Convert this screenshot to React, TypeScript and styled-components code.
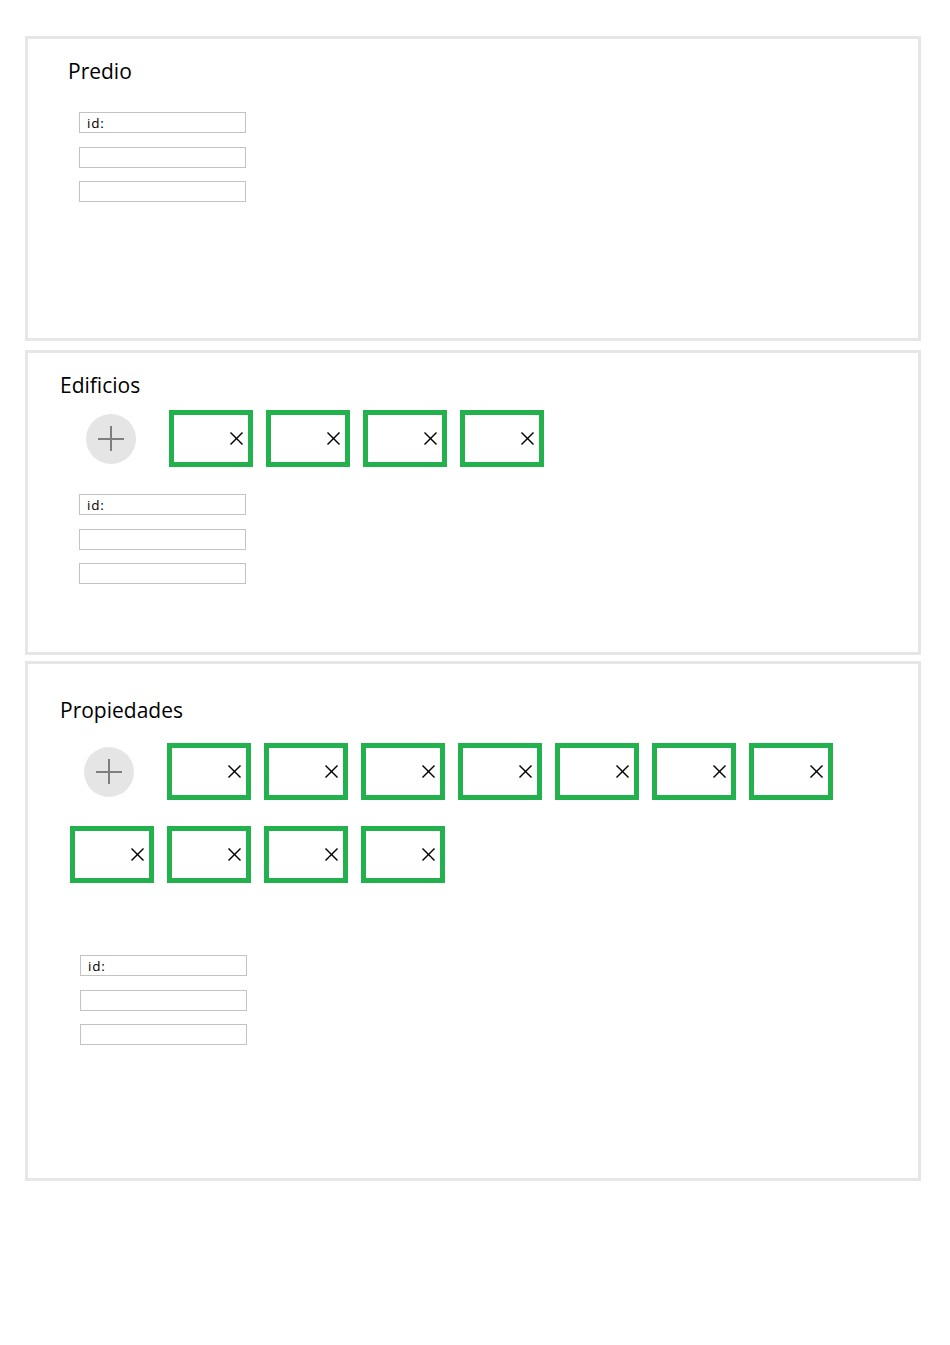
import styled, { createGlobalStyle } from 'styled-components'

/*---> Data <---*/
const sections = [
  { title: 'Predio', height: 305, gap: 0, titleLeft: 40, titleTop: 18, fieldsLeft: 51, fieldsTop: 27, items: null },
  { title: 'Edificios', height: 305, gap: 9, titleLeft: 32, titleTop: 18, fieldsLeft: 51, fieldsTop: 27, items: 4, indent: 44, tilesTop: 11 },
  { title: 'Propiedades', height: 520, gap: 6, titleLeft: 32, titleTop: 32, fieldsLeft: 52, fieldsTop: 72, items: 11, indent: 42, tilesTop: 19 },
]

/*---> Component <---*/
export default function App() {
  return (
    <>
      <GlobalStyle />
      <Page>
        {sections.map((s) => (
          <Panel key={s.title} $height={s.height} $gap={s.gap}>
            <Title $left={s.titleLeft} $top={s.titleTop}>
              {s.title}
            </Title>
            {s.items !== null && (
              <Tiles $indent={s.indent ?? 0} $top={s.tilesTop ?? 0}>
                <AddSlot>
                  <AddButton type="button" aria-label="Agregar">
                    <svg width="28" height="28" viewBox="0 0 28 28">
                      <line x1="1" y1="14" x2="27" y2="14" stroke="#7f7f7f" strokeWidth="2" />
                      <line x1="14" y1="1" x2="14" y2="26" stroke="#7f7f7f" strokeWidth="2" />
                    </svg>
                  </AddButton>
                </AddSlot>
                {Array.from({ length: s.items }).map((_, i) => (
                  <Tile key={i}>
                    <CloseMark width="13" height="13" viewBox="0 0 13 13">
                      <line x1="0.5" y1="0.5" x2="12.5" y2="12.5" stroke="#000" strokeWidth="1.4" />
                      <line x1="12.5" y1="0.5" x2="0.5" y2="12.5" stroke="#000" strokeWidth="1.4" />
                    </CloseMark>
                  </Tile>
                ))}
              </Tiles>
            )}
            <Fields $left={s.fieldsLeft} $top={s.fieldsTop}>
              <Field defaultValue="id:" readOnly />
              <Field readOnly />
              <Field readOnly />
            </Fields>
          </Panel>
        ))}
      </Page>
    </>
  )
}

/*---> Styles <---*/
const GlobalStyle = createGlobalStyle`
  html, body {
    margin: 0;
    background: #ffffff;
    font-family: "Open Sans", "Noto Sans", sans-serif;
    color: #000000;
  }
`

const Page = styled.div`
  padding: 36px 0 0 25px;
  width: 896px;
`

const Panel = styled.section<{ $height: number; $gap: number }>`
  box-sizing: border-box;
  height: ${(p) => p.$height}px;
  margin-top: ${(p) => p.$gap}px;
  border: 3px solid #e6e6e6;
  overflow: hidden;
`

const Title = styled.div<{ $left: number; $top: number }>`
  margin: ${(p) => p.$top}px 0 0 ${(p) => p.$left}px;
  font-size: 21px;
  line-height: 28px;
`

const Tiles = styled.div<{ $indent: number; $top: number }>`
  display: flex;
  flex-wrap: wrap;
  align-items: center;
  column-gap: 13px;
  row-gap: 26px;
  margin-top: ${(p) => p.$top}px;
  padding-left: ${(p) => p.$indent}px;
`

const AddSlot = styled.div`
  box-sizing: border-box;
  width: 84px;
  padding-left: 14px;
  display: flex;
  justify-content: flex-start;
`

const AddButton = styled.button`
  width: 50px;
  height: 50px;
  border-radius: 50%;
  border: none;
  padding: 0;
  background: #e5e5e5;
  display: flex;
  align-items: center;
  justify-content: center;
`

const Tile = styled.div`
  box-sizing: border-box;
  width: 84px;
  height: 57px;
  border: 5px solid #22b14c;
  display: flex;
  align-items: center;
  justify-content: flex-end;
  padding-right: 5px;
`

const CloseMark = styled.svg`
  display: block;
`

const Fields = styled.div<{ $left: number; $top: number }>`
  display: flex;
  flex-direction: column;
  gap: 13.5px;
  margin: ${(p) => p.$top}px 0 0 ${(p) => p.$left}px;
`

const Field = styled.input`
  box-sizing: border-box;
  width: 167px;
  height: 21px;
  border: 1px solid #c3c3c3;
  border-radius: 0;
  padding: 0 7px;
  font-family: "Open Sans", "Noto Sans", sans-serif;
  font-size: 13.5px;
  letter-spacing: 0.8px;
  color: #000000;
  background: #ffffff;
  outline: none;
`
